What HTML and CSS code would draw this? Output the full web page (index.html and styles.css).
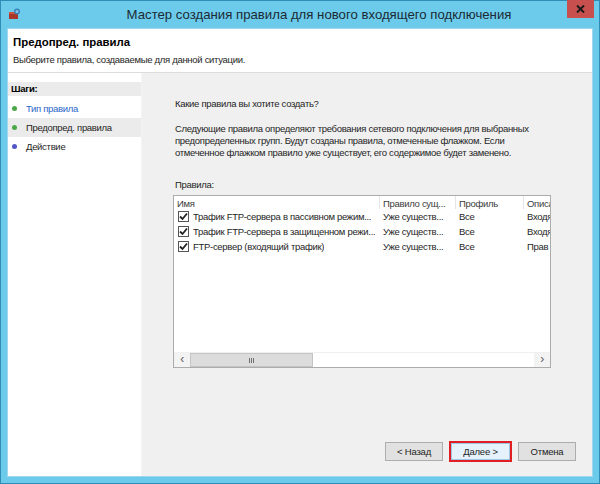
FILE: index.html
```html
<!DOCTYPE html>
<html lang="ru">
<head>
    <meta charset="UTF-8">
    <title>Мастер создания правила для нового входящего подключения</title>
    <link rel="stylesheet" href="styles.css">
</head>
<body>
  <div class="window">
    <div class="titlebar">
      <svg class="appicon" width="13" height="12" viewBox="0 0 13 12">
        <rect x="1" y="4" width="9" height="7" fill="#a8372a"/>
        <rect x="1" y="4" width="9" height="2" fill="#c9533c"/>
        <circle cx="9" cy="3.5" r="3" fill="#3c7fb8"/>
        <circle cx="9" cy="3.5" r="1.5" fill="#8cc3e8"/>
      </svg>
      <div class="title">Мастер создания правила для нового входящего подключения</div>
      <div class="close">
        <svg width="9" height="8" viewBox="0 0 9 8"><path d="M1 0.5 L8 7.5 M8 0.5 L1 7.5" stroke="#1a1a1a" stroke-width="2"/></svg>
      </div>
    </div>
    <div class="client">
      <div class="header">
        <h1>Предопред. правила</h1>
        <p>Выберите правила, создаваемые для данной ситуации.</p>
      </div>
      <div class="body">
        <div class="steps">
          <div class="steps-title">Шаги:</div>
          <div class="step done"><span class="dot green"></span>Тип правила</div>
          <div class="step current"><span class="dot green"></span>Предопред. правила</div>
          <div class="step"><span class="dot blue"></span>Действие</div>
        </div>
        <div class="main">
          <div class="content">
            <p class="question">Какие правила вы хотите создать?</p>
            <p class="info">Следующие правила определяют требования сетевого подключения для выбранных предопределенных групп. Будут созданы правила, отмеченные флажком. Если отмеченное флажком правило уже существует, его содержимое будет заменено.</p>
            <p class="label">Правила:</p>
            <div class="list">
              <div class="cols">
                <div class="row head">
                  <div class="c c1">Имя</div>
                  <div class="c c2">Правило сущ...</div>
                  <div class="c c3">Профиль</div>
                  <div class="c c4">Описа</div>
                </div>
                <div class="row">
                  <div class="c c1"><span class="chk"><svg width="9" height="9" viewBox="0 0 9 9"><path d="M1 4.5 L3.5 7 L8 1.5" fill="none" stroke="#222" stroke-width="1.8"/></svg></span><span class="name">Трафик FTP-сервера в пассивном режим...</span></div>
                  <div class="c c2">Уже существ...</div>
                  <div class="c c3">Все</div>
                  <div class="c c4">Входя</div>
                </div>
                <div class="row">
                  <div class="c c1"><span class="chk"><svg width="9" height="9" viewBox="0 0 9 9"><path d="M1 4.5 L3.5 7 L8 1.5" fill="none" stroke="#222" stroke-width="1.8"/></svg></span><span class="name">Трафик FTP-сервера в защищенном режи...</span></div>
                  <div class="c c2">Уже существ...</div>
                  <div class="c c3">Все</div>
                  <div class="c c4">Входя</div>
                </div>
                <div class="row">
                  <div class="c c1"><span class="chk"><svg width="9" height="9" viewBox="0 0 9 9"><path d="M1 4.5 L3.5 7 L8 1.5" fill="none" stroke="#222" stroke-width="1.8"/></svg></span><span class="name">FTP-сервер (входящий трафик)</span></div>
                  <div class="c c2">Уже существ...</div>
                  <div class="c c3">Все</div>
                  <div class="c c4">Прав</div>
                </div>
              </div>
              <div class="hscroll">
                <div class="arrow">&#8249;</div>
                <div class="thumb"><span class="grip"></span></div>
                <div class="track"></div>
                <div class="arrow">&#8250;</div>
              </div>
            </div>
          </div>
          <div class="buttons">
            <button class="btn">&lt; Назад</button>
            <button class="btn next">Далее &gt;</button>
            <button class="btn">Отмена</button>
          </div>
        </div>
      </div>
    </div>
  </div>
</body>
</html>
```

FILE: styles.css
```css
* {
  box-sizing: border-box;
}
body {
  margin: 0;
  font-family: "Liberation Sans", Arial, sans-serif;
  font-size: 9.5px;
  letter-spacing: -0.3px;
  color: #1e1e1e;
}
.window {
  width: 600px;
  height: 484px;
  background-color: #6ccbea;
  border: 1px solid #2f8db5;
  padding: 0 6px 6px 6px;
  display: flex;
  flex-direction: column;
}
.titlebar {
  height: 27px;
  display: flex;
  align-items: center;
  position: relative;
}
.appicon {
  margin-left: 1px;
  margin-top: -2px;
}
.title {
  flex: 1;
  text-align: center;
  font-size: 13.2px;
  letter-spacing: 0;
  color: #1b2a35;
  padding-left: 24px;
}
.close {
  position: absolute;
  right: -1px;
  top: -1px;
  width: 27px;
  height: 18px;
  background-color: #c7504f;
  display: flex;
  align-items: center;
  justify-content: center;
}
.client {
  flex: 1;
  background-color: #f0f0f0;
  display: flex;
  flex-direction: column;
  border: 1px solid #9fd8ee;
}
.header {
  height: 44px;
  background-color: #fff;
  border-bottom: 1px solid #dcdcdc;
  padding: 3px 0 0 5px;
}
.header h1 {
  margin: 0;
  font-size: 11.4px;
  letter-spacing: 0;
  font-weight: bold;
  line-height: 20px;
  color: #000;
}
.header p {
  margin: 0;
  line-height: 16px;
}
.body {
  flex: 1;
  display: flex;
}
.steps {
  width: 134px;
  background-color: #fff;
  padding-top: 9px;
  border-right: 1px solid #f4f4f4;
}
.steps-title {
  background-color: #ebebeb;
  font-weight: bold;
  height: 14px;
  line-height: 14px;
  padding-left: 3px;
  color: #000;
}
.step {
  height: 19px;
  line-height: 19px;
  display: flex;
  align-items: center;
  padding-left: 4px;
}
.step.done {
  color: #2a66c9;
  margin-top: 3px;
}
.step.current {
  background-color: #ebebeb;
}
.dot {
  width: 5px;
  height: 5px;
  border-radius: 50%;
  margin-right: 9px;
}
.dot.green {
  background-color: #4aa84a;
}
.dot.blue {
  background-color: #5257c8;
}
.main {
  flex: 1;
  display: flex;
  flex-direction: column;
}
.content {
  flex: 1;
  padding: 24px 0 0 33px;
}
.content p {
  margin: 0;
}
.question {
  line-height: 14px;
}
.info {
  margin-top: 12px !important;
  width: 372px;
  line-height: 12px;
}
.label {
  margin-top: 19px !important;
  line-height: 14px;
}
.list {
  margin-top: 3px;
  margin-left: -2px;
  width: 378px;
  height: 173px;
  background-color: #fff;
  border: 1px solid #acacac;
  display: flex;
  flex-direction: column;
}
.cols {
  flex: 1;
  overflow: hidden;
}
.row {
  display: flex;
  height: 15px;
  line-height: 15px;
  white-space: nowrap;
}
.row.head {
  height: 13px;
  line-height: 14px;
  color: #3c3c3c;
}
.row.head .c {
  padding-top: 1px;
  border-right: 1px solid #e5e5e5;
}
.c {
  overflow: hidden;
  padding-left: 3px;
}
.c1 {
  width: 206px;
  display: flex;
  align-items: center;
}
.row.head .c1 {
  display: block;
}
.name {
  overflow: hidden;
}
.c2 {
  width: 76px;
}
.c3 {
  width: 68px;
}
.c4 {
  flex: 1;
}
.row.head .c4 {
  border-right: none;
}
.chk {
  flex: none;
  width: 11px;
  height: 11px;
  border: 1px solid #555;
  background-color: #fff;
  margin-left: 1px;
  margin-right: 4px;
  display: flex;
  align-items: center;
  justify-content: center;
}
.hscroll {
  height: 15px;
  display: flex;
  background-color: #f3f3f3;
  border-top: 1px solid #f0f0f0;
}
.arrow {
  width: 16px;
  text-align: center;
  line-height: 13px;
  font-size: 12px;
  color: #606060;
  background-color: #f3f3f3;
}
.thumb {
  width: 123px;
  background-color: #dcdcdc;
  border: 1px solid #c4c4c4;
  display: flex;
  align-items: center;
  justify-content: center;
}
.grip {
  width: 5px;
  height: 5px;
  border-left: 1px solid #707070;
  border-right: 1px solid #707070;
  position: relative;
}
.grip::after {
  content: "";
  position: absolute;
  left: 1px;
  top: 0;
  width: 1px;
  height: 5px;
  background-color: #707070;
}
.track {
  flex: 1;
  background-color: #fff;
}
.buttons {
  display: flex;
  justify-content: flex-end;
  gap: 6px;
  padding: 0 16px 14px 0;
}
.btn {
  font-family: "Liberation Sans", Arial, sans-serif;
  font-size: 9.5px;
  letter-spacing: -0.2px;
  color: #1e1e1e;
  width: 58px;
  height: 19px;
  background-color: #e1e1e1;
  border: 1px solid #adadad;
  padding: 0;
}
.btn.next {
  width: 63px;
  height: 21px;
  margin-top: -1px;
  border: 2px solid #e01e24;
  box-shadow: inset 0 0 0 1px #9ec7e6;
  background-color: #e5f1fb;
}
```
